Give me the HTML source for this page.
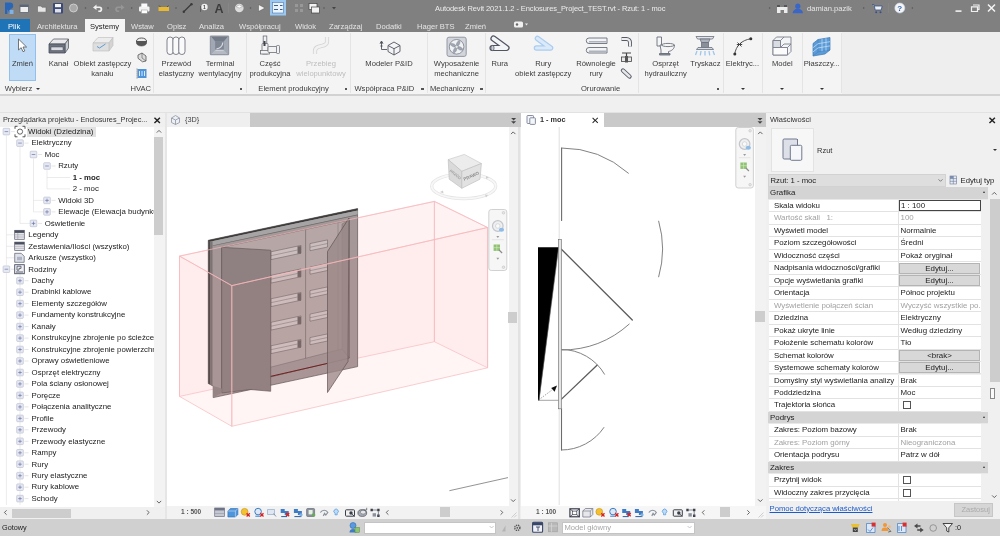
<!DOCTYPE html><html lang="pl"><head><meta charset="utf-8"><title>Autodesk Revit 2021.1.2 - Enclosures_Project_TEST.rvt - Rzut: 1 - moc</title><style>
*{box-sizing:border-box;margin:0;padding:0}
html,body{width:1000px;height:536px;overflow:hidden;background:#eeeeee}
body{font-family:"Liberation Sans",sans-serif;font-size:7.4px;color:#333;position:relative;filter:blur(0.4px)}
.a{position:absolute}
.t{position:absolute;white-space:nowrap;line-height:10px}
.c{position:absolute;white-space:nowrap;line-height:10.6px;text-align:center;transform:translateX(-50%);font-size:7.6px;color:#3a3a3a}
.sep{position:absolute;width:1px;background:#e4e4e4;top:33px;height:60px}
.tab{position:absolute;top:19.5px;height:13px;line-height:13px;color:#e4e4e4;font-size:7.6px;white-space:nowrap}
.row{position:absolute;left:0;height:11.4px;line-height:11.4px;white-space:nowrap;font-size:7.85px;color:#222}
.pm{position:absolute;width:5px;height:5px;border:0.6px solid #aaa;background:#f4f4f4}
.pr{white-space:nowrap;overflow:hidden;position:absolute;left:769px;width:212px;height:12.48px;border-bottom:1px solid #e2e2e2;background:#fff;font-size:7.9px;line-height:11.8px;color:#222}
.pr .k{position:absolute;left:5px;top:0;letter-spacing:-0.05px}
.pr .v{position:absolute;left:131.5px;top:0}
.pr .vs{position:absolute;left:129px;top:0;bottom:0;width:1px;background:#e2e2e2}
.gh{position:absolute;left:768px;width:220px;height:12.48px;background:#d4d4d4;font-size:7.9px;line-height:11.8px;color:#222;padding-left:2px;border-bottom:1px solid #e8e8e8}
.btn{position:absolute;left:130px;top:0.4px;width:81px;height:11px;background:#d8d8d8;border:0.7px solid #b4b4b4;text-align:center;line-height:9.8px}
.cb{position:absolute;left:133.5px;top:1.8px;width:8px;height:8px;border:0.8px solid #555;background:#fff}
</style></head><body>
<div class="a" style="left:0;top:0;width:1000px;height:31.6px;background:#808080"></div>
<div class="t" style="left:435px;top:4px;color:#ececec;font-size:7.5px;letter-spacing:-0.1px">Autodesk Revit 2021.1.2 - Enclosures_Project_TEST.rvt - Rzut: 1 - moc</div>
<div class="t" style="left:807px;top:4px;color:#e6e6e6;font-size:7.6px">damian.pazik</div>
<div class="a" style="left:0;top:19px;width:30px;height:12.6px;background:#1f74b8"></div>
<div class="a" style="left:85px;top:19.2px;width:40.2px;height:12.6px;background:#f4f4f4"></div>
<div class="tab" style="left:8px;color:#fff;">Plik</div>
<div class="tab" style="left:37px;">Architektura</div>
<div class="tab" style="left:90px;color:#222;">Systemy</div>
<div class="tab" style="left:131px;">Wstaw</div>
<div class="tab" style="left:167px;">Opisz</div>
<div class="tab" style="left:199px;">Analiza</div>
<div class="tab" style="left:239px;">Współpracuj</div>
<div class="tab" style="left:295px;">Widok</div>
<div class="tab" style="left:329px;">Zarządzaj</div>
<div class="tab" style="left:376px;">Dodatki</div>
<div class="tab" style="left:417px;">Hager BTS</div>
<div class="tab" style="left:465px;">Zmień</div>
<div class="a" style="left:0;top:31.6px;width:1000px;height:63.4px;background:#eeeeee"></div>
<div class="a" style="left:0;top:31.6px;width:842px;height:63.4px;background:#f4f4f4"></div>
<div class="a" style="left:0;top:94px;width:1000px;height:1.5px;background:#d2d2d2"></div>
<div class="a" style="left:9px;top:34px;width:27px;height:47px;background:#bfdbf5;border:1px solid #93c0ea"></div>
<div class="sep" style="left:153px"></div>
<div class="sep" style="left:246px"></div>
<div class="sep" style="left:350px"></div>
<div class="sep" style="left:427px"></div>
<div class="sep" style="left:485px"></div>
<div class="sep" style="left:638px"></div>
<div class="sep" style="left:723px"></div>
<div class="sep" style="left:762px"></div>
<div class="sep" style="left:802px"></div>
<div class="sep" style="left:841px"></div>
<div class="c" style="left:22.5px;top:58.9px;">Zmień</div>
<div class="c" style="left:58.4px;top:58.9px;">Kanał</div>
<div class="c" style="left:102.4px;top:58.9px;">Obiekt zastępczy<br>kanału</div>
<div class="c" style="left:176.4px;top:58.9px;">Przewód<br>elastyczny</div>
<div class="c" style="left:220px;top:58.9px;">Terminal<br>wentylacyjny</div>
<div class="c" style="left:270px;top:58.9px;">Część<br>produkcyjna</div>
<div class="c" style="left:321px;top:58.9px;color:#bdbdbd;">Przebieg<br>wielopunktowy</div>
<div class="c" style="left:389px;top:58.9px;">Modeler P&amp;ID</div>
<div class="c" style="left:456.6px;top:58.9px;">Wyposażenie<br>mechaniczne</div>
<div class="c" style="left:499.8px;top:58.9px;">Rura</div>
<div class="c" style="left:543.2px;top:58.9px;">Rury<br>obiekt zastępczy</div>
<div class="c" style="left:596px;top:58.9px;">Równoległe<br>rury</div>
<div class="c" style="left:665.6px;top:58.9px;">Osprzęt<br>hydrauliczny</div>
<div class="c" style="left:705.4px;top:58.9px;">Tryskacz</div>
<div class="c" style="left:742.4px;top:58.9px;">Elektryc...</div>
<div class="c" style="left:782.4px;top:58.9px;">Model</div>
<div class="c" style="left:821.6px;top:58.9px;">Płaszczy...</div>
<div class="c" style="left:18.5px;top:84.2px;">Wybierz</div>
<div class="c" style="left:140.8px;top:84.2px;">HVAC</div>
<div class="c" style="left:293.6px;top:84.2px;">Element produkcyjny</div>
<div class="c" style="left:384.4px;top:84.2px;">Współpraca P&amp;ID</div>
<div class="c" style="left:452.2px;top:84.2px;">Mechaniczny</div>
<div class="c" style="left:600.6px;top:84.2px;">Orurowanie</div>
<div class="a" style="left:239.7px;top:88px;width:2.4px;height:2.4px;background:#555"></div>
<div class="a" style="left:344.5px;top:88px;width:2.4px;height:2.4px;background:#555"></div>
<div class="a" style="left:421.3px;top:88px;width:2.4px;height:2.4px;background:#555"></div>
<div class="a" style="left:480.3px;top:88px;width:2.4px;height:2.4px;background:#555"></div>
<div class="a" style="left:717.1px;top:88px;width:2.4px;height:2.4px;background:#555"></div>
<div class="a" style="left:35.6px;top:88px;width:0;height:0;border-left:2.2px solid transparent;border-right:2.2px solid transparent;border-top:2.6px solid #333"></div>
<div class="a" style="left:740.6px;top:88px;width:0;height:0;border-left:2.2px solid transparent;border-right:2.2px solid transparent;border-top:2.6px solid #333"></div>
<div class="a" style="left:779.8px;top:88px;width:0;height:0;border-left:2.2px solid transparent;border-right:2.2px solid transparent;border-top:2.6px solid #333"></div>
<div class="a" style="left:819.5px;top:88px;width:0;height:0;border-left:2.2px solid transparent;border-right:2.2px solid transparent;border-top:2.6px solid #333"></div>
<svg class="a" style="left:0;top:0" width="1000" height="95" viewBox="0 0 1000 95">
<!-- ===== title bar quick access ===== -->
<g>
<!-- Revit R -->
<path d="M5 2.5 h5 a3.2 3.2 0 0 1 0 6.4 l3 5 h-3 l-2.6-4.6 v4.6 h-2.4z" fill="#2a66b8"/>
<rect x="9.5" y="10" width="4" height="4" fill="#7fb2e6"/>
<!-- new window -->
<rect x="20" y="5" width="8.5" height="7.5" fill="#eee" stroke="#5b6678" stroke-width="0.8"/><rect x="20" y="5" width="8.5" height="2" fill="#5b6678"/>
<!-- open -->
<path d="M37.5 6 h3.5 l1 1.2 h4 v5 h-8.5z" fill="#e6e6e6" stroke="#666" stroke-width="0.6"/>
<!-- save -->
<rect x="53" y="3" width="10" height="10.5" rx="1" fill="#3b4a78"/><rect x="55" y="4" width="6" height="3.2" fill="#f4f4f4"/><rect x="55" y="9" width="6" height="3.5" fill="#e0e0e8"/>
<!-- sync -->
<circle cx="73.5" cy="8" r="4" fill="#a8a8a8" stroke="#d8d8d8" stroke-width="0.8"/>
<circle cx="85.5" cy="8" r="0.8" fill="#555"/>
<!-- undo -->
<path d="M93 7.5 l3.5-3 v2 h3 a2.8 2.8 0 0 1 0 5.6 h-1.2 v-1.6 h1 a1.2 1.2 0 0 0 0-2.4 h-2.8 v2z" fill="#f0f0f0"/>
<circle cx="108" cy="8" r="0.8" fill="#555"/>
<!-- redo greyed -->
<path d="M124.5 7.5 l-3.5-3 v2 h-3 a2.8 2.8 0 0 0 0 5.6 h1.2 v-1.6 h-1 a1.2 1.2 0 0 1 0-2.4 h2.8 v2z" fill="#969696"/>
<circle cx="131.7" cy="8" r="0.8" fill="#555"/>
<!-- print -->
<rect x="139" y="6.5" width="10.5" height="5" rx="1" fill="#f2f2f2"/><rect x="141.3" y="3.5" width="6" height="3.5" fill="#fafafa"/><rect x="141.3" y="10" width="6" height="3.5" fill="#fff" stroke="#777" stroke-width="0.4"/>
<!-- measure -->
<rect x="158.5" y="7" width="10.5" height="4" fill="#e8b830"/><path d="M159 5.5 l1.5 1.5 M168.5 5.5 l-1.5 1.5" stroke="#444" stroke-width="0.8"/>
<circle cx="176" cy="8" r="0.8" fill="#555"/>
<!-- aligned dim -->
<path d="M183.5 12 l8-8" stroke="#3a3a3a" stroke-width="1.3"/><circle cx="183.8" cy="11.8" r="1.2" fill="#3a3a3a"/><circle cx="191.5" cy="4.2" r="1.2" fill="#3a3a3a"/>
<!-- tag -->
<circle cx="204.5" cy="7" r="3.2" fill="#f0f0f0"/><text x="204.5" y="9" font-size="5" text-anchor="middle" fill="#444" font-weight="bold">1</text><path d="M200.5 6 v6" stroke="#555" stroke-width="0.8"/>
<!-- A -->
<text x="219" y="13" font-size="12.5" text-anchor="middle" fill="#3c3c3c" font-weight="bold">A</text>
<rect x="228.3" y="3" width="0.6" height="10" fill="#8a8a8a"/>
<!-- 3d -->
<circle cx="239.3" cy="8" r="4.3" fill="#dcdcdc"/><path d="M236 6.5 l3.3-1.5 l3.3 1.5 l-3.3 1.5z" fill="#fff" stroke="#888" stroke-width="0.4"/>
<circle cx="250.5" cy="8" r="0.8" fill="#555"/>
<path d="M258.5 4.5 l6.5 3.5 l-6.5 3.5z" fill="#f4f4f4" stroke="#555" stroke-width="0.5"/>
<!-- highlighted -->
<rect x="270" y="0" width="16" height="15.5" fill="#9bc7f0"/><rect x="272.5" y="2.5" width="11" height="10.5" fill="#eaf3fc" stroke="#4a78b0" stroke-width="0.6"/><path d="M274 5.5 h4 M274 9.5 h4 M280 5.5 h2.5 M280 9.5 h2.5" stroke="#3c5e8c" stroke-width="1.2"/>
<!-- greyed -->
<path d="M295 4 h3 v3 h-3z M300 4 h3 v3 h-3z M295 9 h3 v3 h-3z M300 9 h3 v3 h-3z" fill="#989898"/>
<!-- window switch -->
<rect x="309" y="3.5" width="8" height="6" fill="#f2f2f2" stroke="#444" stroke-width="0.7"/><rect x="311.5" y="7" width="8" height="6" fill="#f2f2f2" stroke="#444" stroke-width="0.7"/>
<circle cx="324" cy="8" r="0.8" fill="#555"/>
<path d="M332 7 h4 l-2 2.5z" fill="#444"/>
</g>
<!-- right side title -->
<g>
<circle cx="769.6" cy="8" r="0.8" fill="#555"/>
<path d="M777 5 h3.5 v8 h-3.5z M784 5 h3.5 v8 h-3.5z M780 7 h4.5 v3 h-4.5z" fill="#ececec"/><rect x="777" y="5" width="3.5" height="2" fill="#555"/><rect x="784" y="5" width="3.5" height="2" fill="#555"/>
<circle cx="797.8" cy="6.2" r="2.6" fill="#3a66c8"/><path d="M792.6 13.2 a5.2 4.4 0 0 1 10.4 0z" fill="#3a66c8"/>
<circle cx="863.7" cy="8" r="0.8" fill="#555"/>
<path d="M872 4.5 h2 l1.2 5.5 h6 l1-4 h-7.5" fill="#f0f0f0" stroke="#34508a" stroke-width="0.8"/><circle cx="876.2" cy="12.2" r="1" fill="#34508a"/><circle cx="880.5" cy="12.2" r="1" fill="#34508a"/>
<rect x="888.2" y="3" width="0.6" height="10" fill="#8a8a8a"/>
<circle cx="899.8" cy="8" r="5" fill="#f4f4f4" stroke="#c8d4e8" stroke-width="0.6"/><text x="899.8" y="11" font-size="8" font-weight="bold" text-anchor="middle" fill="#2c5fb4">?</text>
<circle cx="912.4" cy="8" r="0.8" fill="#555"/>
<rect x="955.5" y="10.3" width="6" height="1.6" fill="#f0f0f0"/>
<path d="M973 5 h6 v4.5 h-1.5 M971.5 6.8 h6 v4.7 h-6z" fill="none" stroke="#f0f0f0" stroke-width="1.2"/>
<path d="M988 4.5 l7 7 M995 4.5 l-7 7" stroke="#f4f4f4" stroke-width="1.5"/>
</g>
<!-- tab row icon -->
<rect x="514" y="21.5" width="9" height="6" rx="1.5" fill="#f0f0f0"/><circle cx="517" cy="24.5" r="1.2" fill="#666"/><path d="M525 23.5 h3 l-1.5 2z" fill="#e8e8e8"/>

<!-- ===== ribbon icons ===== -->
<!-- cursor -->
<path d="M18.5 39 v11 l2.7-2.3 l1.8 4 l1.8-0.8 l-1.8-3.9 h3.6z" fill="#fff" stroke="#555" stroke-width="0.8" stroke-linejoin="round"/>
<!-- Kanał -->
<g stroke-linejoin="round">
<path d="M49 44 l4.5-5 h15 l-3.5 5z" fill="#e9e9ec" stroke="#5a5f6a" stroke-width="0.8"/>
<path d="M65 44 l3.5-5 v9 l-3.5 5z" fill="#c9cbd2" stroke="#5a5f6a" stroke-width="0.8"/>
<rect x="49" y="44" width="16" height="9" fill="#6c7280" stroke="#4a4f5a" stroke-width="0.8"/>
<rect x="51" y="47" width="12" height="3.5" fill="#d9dbe0" stroke="#454a55" stroke-width="0.5"/>
</g>
<!-- Obiekt zastępczy kanału -->
<g stroke-linejoin="round">
<path d="M93 43 l5-5.5 h15 l-4 5.5z" fill="#ececec" stroke="#c2c2c2" stroke-width="0.7"/>
<path d="M109 43 l4-5.5 v8 l-4 5.5z" fill="#d4d4d4" stroke="#c2c2c2" stroke-width="0.7"/>
<rect x="93" y="43" width="16" height="8" fill="#dedede" stroke="#c2c2c2" stroke-width="0.7"/>
<path d="M97 46.5 l2.5 1.5 l6-4" fill="none" stroke="#5b9bd8" stroke-width="1"/>
</g>
<!-- small icons HVAC -->
<ellipse cx="141.5" cy="41" rx="5" ry="3" fill="#ececec" stroke="#4a4a4a" stroke-width="0.9"/><path d="M136.5 41 v2 a5 3 0 0 0 10 0 v-2" fill="#555" stroke="#4a4a4a" stroke-width="0.6"/>
<path d="M138 55 l4-2 l4 3 v5 l-3.5 0.8 l-4.5-3.5z" fill="#dcdcdc" stroke="#555" stroke-width="0.8"/><path d="M142 53 v5 l4 3" fill="none" stroke="#555" stroke-width="0.6"/>
<rect x="137.5" y="69" width="9" height="9" fill="#4f94d8"/><path d="M139.5 71 v5 M142 71 v5 M144.5 71 v5" stroke="#dceafa" stroke-width="1"/><path d="M137 68.5 v10.5" stroke="#555" stroke-width="0.7" stroke-dasharray="1.2 0.8"/>
<!-- Przewód elastyczny -->
<g fill="#fafafa" stroke="#70757f" stroke-width="0.9">
<rect x="167" y="37" width="6.2" height="17.5" rx="3"/><rect x="172.9" y="37" width="6.2" height="17.5" rx="3"/><rect x="178.8" y="37" width="6.2" height="17.5" rx="3"/>
</g>
<!-- Terminal wentylacyjny -->
<rect x="209.8" y="35.6" width="19.4" height="19.6" rx="1.2" fill="#9299a5"/>
<path d="M211 36.8 h17 l-4.2 4.8 h-8.6z" fill="#737b89"/><path d="M211 54 h17 l-4.2-4.6 h-8.6z" fill="#b4b9c3"/><path d="M211 36.8 l4.2 4.8 v7.8 l-4.2 4.6z" fill="#a2a8b3"/><path d="M228 36.8 l-4.2 4.8 v7.8 l4.2 4.6z" fill="#a2a8b3"/>
<rect x="215.2" y="41.6" width="8.6" height="7.8" fill="#7f8694"/>
<path d="M216.5 48.8 a6.5 6.5 0 0 0 6.3-6.3" fill="none" stroke="#d4d8df" stroke-width="1.3"/><path d="M215.5 50.6 h8" stroke="#cfd3da" stroke-width="1"/>
<!-- Część produkcyjna -->
<g stroke="#6a6f78" stroke-width="0.8" fill="#f2f2f2">
<rect x="263.2" y="36" width="3.6" height="9"/><rect x="262" y="43.5" width="6" height="10.5" rx="0.8"/><rect x="260.5" y="50.5" width="9" height="3.5"/>
<rect x="268" y="46.5" width="10.5" height="6" rx="1"/><rect x="276.5" y="45.5" width="3" height="8" rx="0.8"/>
</g><rect x="263.5" y="41" width="2" height="5" fill="#3f444c"/>
<!-- Przebieg wielopunktowy -->
<path d="M327 37 v5 c0 6-12 2-12 9 v3" fill="none" stroke="#d3d3d3" stroke-width="4.2"/><path d="M327 37 v5 c0 6-12 2-12 9 v3" fill="none" stroke="#f2f2f2" stroke-width="2.6"/>
<!-- Modeler P&ID -->
<g fill="none" stroke="#50555f" stroke-width="0.9" stroke-linejoin="round">
<path d="M388 45.5 l6-3.5 l6 3.5 v6 l-6 3.5 l-6-3.5z" fill="#f4f4f6"/><path d="M388 45.5 l6 3.2 l6-3.2 M394 48.7 v6.3"/>
<path d="M381.5 41.5 v8 h5.5"/><path d="M380 43.5 l1.5-2.5 l1.5 2.5" fill="#50555f"/>
</g><circle cx="381.5" cy="46" r="1" fill="#50555f"/>
<!-- Wyposażenie mechaniczne -->
<rect x="447" y="37.2" width="19.2" height="19.2" rx="2" fill="#d2d5db" stroke="#8a8f99" stroke-width="0.9"/><circle cx="456.6" cy="46.8" r="7.3" fill="#f1f2f4" stroke="#7a808c" stroke-width="0.8"/>
<path d="M456.6 46.8 c-1-3 1-6 3-6.3 c1 2 0 5-3 6.3 c3-1 6 1 6.3 3 c-2 1-5 0-6.3-3 c1 3-1 6-3 6.3 c-1-2 0-5 3-6.3 c-3 1-6-1-6.3-3 c2-1 5 0 6.3 3z" fill="#9fa5b1" stroke="#7a808c" stroke-width="0.4"/><circle cx="456.6" cy="46.8" r="1.6" fill="#e8e9ec" stroke="#7a808c" stroke-width="0.5"/>
<!-- Rura -->
<path d="M493.5 38.5 l13 9.5 h-14" fill="none" stroke="#4f5561" stroke-width="6.2" stroke-linejoin="round" stroke-linecap="round"/><path d="M493.5 38.5 l13 9.5 h-14" fill="none" stroke="#f4f5f7" stroke-width="3.8" stroke-linejoin="round" stroke-linecap="round"/><ellipse cx="492.5" cy="48" rx="1.6" ry="2.6" fill="#c8ccd4" stroke="#4f5561" stroke-width="0.7"/>
<!-- Rury obiekt zastępczy -->
<path d="M537.5 38.5 l13 9.5 h-14" fill="none" stroke="#a9cdf0" stroke-width="5.6" stroke-linejoin="round" stroke-linecap="round"/><path d="M537.5 38.5 l13 9.5 h-14" fill="none" stroke="#dbe9f8" stroke-width="3.2" stroke-linejoin="round" stroke-linecap="round"/>
<!-- Równoległe rury -->
<g stroke="#6a707c" stroke-width="0.9" fill="#f2f3f5">
<path d="M589 38 h18 v5.5 h-18 a2.75 2.75 0 0 1 0-5.5z"/><path d="M589 47.5 h18 v5.5 h-18 a2.75 2.75 0 0 1 0-5.5z"/></g>
<path d="M589 41.7 h18 M589 51.2 h18" stroke="#aeb3bd" stroke-width="1.4"/>
<!-- small icons pipes -->
<path d="M621.5 39 h5 a3.5 3.5 0 0 1 3.5 3.5 v4" fill="none" stroke="#555a64" stroke-width="4"/><path d="M621.5 39 h5 a3.5 3.5 0 0 1 3.5 3.5 v4" fill="none" stroke="#ededf0" stroke-width="2.2"/>
<path d="M622 53 h9 M626.5 53 v4" stroke="#444" stroke-width="1.2"/><rect x="621.5" y="57" width="10" height="4.5" fill="#e8e8ea" stroke="#444" stroke-width="0.8"/><rect x="625" y="56" width="3" height="6.5" fill="#555"/>
<path d="M623 70.5 l6.5 6" stroke="#555a64" stroke-width="4.4" stroke-linecap="round"/><path d="M623 70.5 l6.5 6" stroke="#e6e7ea" stroke-width="2.4" stroke-linecap="round"/>
<!-- Osprzęt hydrauliczny -->
<g stroke="#6a707c" stroke-width="0.9" fill="#f5f5f6" stroke-linejoin="round">
<path d="M657 37 h4.5 v9 h-4.5z"/><path d="M660 45 h14.5 c0 4-3 6-6 6.5 v2 h-7.5 v-3.5z"/><path d="M659.5 53.5 h10.5 v1.5 h-10.5z" fill="#8a8f99"/><ellipse cx="668" cy="45" rx="6.3" ry="1.6"/></g>
<!-- Tryskacz -->
<g stroke="#6a707c" stroke-width="0.8" stroke-linejoin="round">
<path d="M696 36.5 h18 l-1.5 2.5 h-15z" fill="#e3e5ea"/><path d="M700 39 h10 l-1.5 3.5 h-7z" fill="#aeb3bd"/><path d="M701.5 42.5 h7 v5 h-7z" fill="#8a8f99"/><path d="M698 47.5 h14 l1.5 2 h-17z" fill="#d8dbe1"/></g>
<path d="M697 51 l-1.5 4 M701 51 l-0.7 4.3 M705 51 v4.5 M709 51 l0.7 4.3 M713 51 l1.5 4" stroke="#9cc6ee" stroke-width="1.3"/>
<!-- Elektryc -->
<path d="M734.8 54 c1-8 7-14 16-15.2" fill="none" stroke="#444" stroke-width="0.9"/><circle cx="734.8" cy="54" r="1.5" fill="#333"/><circle cx="750.8" cy="38.8" r="1.5" fill="#333"/><path d="M737.5 42.5 l4 4 M741.5 42.5 l-4 4 M736.8 44.5 h5.4" stroke="#333" stroke-width="0.9"/>
<!-- Model -->
<g stroke="#7a808c" stroke-width="0.9" stroke-linejoin="round">
<path d="M773 40.5 l3.5-3.5 h14.5 v14.5 l-3.5 3.5 h-14.5z" fill="#f3f4f6"/><path d="M773 40.5 h7.5 v7 h7 v7.5 M780.5 40.5 l3.5-3.5 M787.5 47.5 l3.5-3.5 M780.5 47.5 l3.5-3.5 h7" fill="none"/><rect x="773" y="40.5" width="7.5" height="7" fill="#d9dce2"/><rect x="773" y="47.5" width="14.5" height="7.5" fill="#fbfbfc"/></g>
<!-- Płaszczy -->
<g stroke-linejoin="round"><path d="M813 43.5 l5-4 l12-2 v12.5 l-5 4 l-12 2z" fill="#5a9bd8" stroke="#3f78b4" stroke-width="0.7"/>
<path d="M818 39.5 v12.5 l-5 4 M818 52 l12-2" fill="none" stroke="#3f78b4" stroke-width="0.5"/>
<path d="M822 38.8 v12.5 M826 38.2 v12.5 M818 43.7 l12-2 M818 47.9 l12-2 M813 47.7 l5-4 M813 51.9 l5-4" stroke="#cfe3f6" stroke-width="0.7" fill="none"/></g>
</svg>

<div class="a" style="left:0;top:95.5px;width:1000px;height:17.5px;background:#f0f0f0"></div>
<div class="a" style="left:0;top:112px;width:1000px;height:1px;background:#e2e2e2"></div>
<div class="a" style="left:0;top:113px;width:166px;height:14px;background:#f0f0f0"></div>
<div class="t" style="left:3px;top:115px;font-size:7.3px;color:#333">Przeglądarka projektu - Enclosures_Projec...</div>
<div class="t" style="left:153px;top:113.5px;font-size:10px;line-height:13px;color:#222;font-weight:bold">✕</div>
<div class="a" style="left:0;top:127px;width:154px;height:380px;background:#fff;overflow:hidden" id="tree">
<div class="a" style="left:27px;top:-0.8px;width:69px;height:11px;background:#e0e0e0"></div>
<div class="row" style="left:28px;top:-1.1px;">Widoki (Dziedzina)</div>
<div class="row" style="left:31.6px;top:10.37px;">Elektryczny</div>
<div class="row" style="left:44.7px;top:21.84px;">Moc</div>
<div class="row" style="left:58.2px;top:33.31px;">Rzuty</div>
<div class="row" style="left:72.7px;top:44.78px;font-weight:bold;">1 - moc</div>
<div class="row" style="left:72.7px;top:56.25px;">2 - moc</div>
<div class="row" style="left:58.2px;top:67.72px;">Widoki 3D</div>
<div class="row" style="left:58.2px;top:79.19px;">Elewacje (Elewacja budynku</div>
<div class="row" style="left:44.7px;top:90.66px;">Oświetlenie</div>
<div class="row" style="left:28.3px;top:102.13px;">Legendy</div>
<div class="row" style="left:28.3px;top:113.6px;">Zestawienia/Ilości (wszystko)</div>
<div class="row" style="left:28.3px;top:125.07px;">Arkusze (wszystko)</div>
<div class="row" style="left:28.3px;top:136.54px;">Rodziny</div>
<div class="row" style="left:31.6px;top:148.01px;">Dachy</div>
<div class="row" style="left:31.6px;top:159.48px;">Drabinki kablowe</div>
<div class="row" style="left:31.6px;top:170.95px;">Elementy szczegółów</div>
<div class="row" style="left:31.6px;top:182.42px;">Fundamenty konstrukcyjne</div>
<div class="row" style="left:31.6px;top:193.89px;">Kanały</div>
<div class="row" style="left:31.6px;top:205.36px;">Konstrukcyjne zbrojenie po ścieżce</div>
<div class="row" style="left:31.6px;top:216.83px;">Konstrukcyjne zbrojenie powierzchni</div>
<div class="row" style="left:31.6px;top:228.3px;">Oprawy oświetleniowe</div>
<div class="row" style="left:31.6px;top:239.77px;">Osprzęt elektryczny</div>
<div class="row" style="left:31.6px;top:251.24px;">Pola ściany osłonowej</div>
<div class="row" style="left:31.6px;top:262.71px;">Poręcze</div>
<div class="row" style="left:31.6px;top:274.18px;">Połączenia analityczne</div>
<div class="row" style="left:31.6px;top:285.65px;">Profile</div>
<div class="row" style="left:31.6px;top:297.12px;">Przewody</div>
<div class="row" style="left:31.6px;top:308.59px;">Przewody elastyczne</div>
<div class="row" style="left:31.6px;top:320.06px;">Rampy</div>
<div class="row" style="left:31.6px;top:331.53px;">Rury</div>
<div class="row" style="left:31.6px;top:343px;">Rury elastyczne</div>
<div class="row" style="left:31.6px;top:354.47px;">Rury kablowe</div>
<div class="row" style="left:31.6px;top:365.94px;">Schody</div>
<div class="row" style="left:31.6px;top:377.41px;">Stropy</div>
</div>
<div class="a" style="left:154px;top:127px;width:11px;height:380px;background:#f3f3f3"></div>
<div class="a" style="left:154.3px;top:137px;width:9px;height:98px;background:#cdcdcd"></div>
<div class="a" style="left:0;top:507px;width:166px;height:12px;background:#f0f0f0"></div>
<div class="a" style="left:12px;top:509.3px;width:58.5px;height:8.5px;background:#cdcdcd"></div>
<div class="a" style="left:165px;top:113px;width:2px;height:406px;background:#e6e6e6"></div>
<div class="a" style="left:167px;top:113px;width:353.5px;height:14px;background:#c9c9c9"></div>
<div class="a" style="left:167px;top:113px;width:83px;height:14px;background:#efefef"></div>
<div class="t" style="left:185px;top:115px;font-size:7.3px;color:#444">{3D}</div>
<div class="a" style="left:167px;top:127px;width:341.6px;height:378.5px;background:#fff"></div>
<div class="a" style="left:508.6px;top:127px;width:9.6px;height:378.5px;background:#f2f2f2"></div>
<div class="a" style="left:508px;top:311.5px;width:9.4px;height:11.2px;background:#cdcdcd"></div>
<div class="a" style="left:167px;top:505.5px;width:351.2px;height:13.7px;background:#f2f2f2"></div>
<div class="t" style="left:181px;top:507px;font-size:6.5px;font-weight:bold;color:#555">1 : 500</div>
<div class="a" style="left:440px;top:507px;width:10px;height:10px;background:#cdcdcd"></div>
<div class="a" style="left:518.2px;top:127px;width:2.3px;height:392.2px;background:#e2e2e2"></div>
<svg class="a" style="left:167px;top:127px" width="342" height="378" viewBox="167 127 342 378">
<!-- wall box -->
<g fill="rgba(255,110,110,0.055)" stroke="#f8c2c6" stroke-width="0.7" stroke-linejoin="round">
<polygon points="179.5,256.1 434.4,201.4 434.4,341.7 179.5,396.4"/>
<polygon points="434.4,201.4 487.6,227.5 487.6,367.8 434.4,341.7"/>
</g>
<!-- enclosure -->
<g stroke-linejoin="round">
<polygon points="208.3,240.3 357.6,208.6 357.6,366.6 213.2,397.6 213.2,386 208.3,383.5" fill="#a39999" stroke="#5a5555" stroke-width="0.7"/>
<polygon points="208.3,240.3 357.6,208.6 357.6,210.4 208.3,242.1" fill="#3e3c3c"/>
<polygon points="212.5,241.2 357.6,210.4 357.6,214.6 212.5,245.4" fill="#a6a4a4"/>
<polygon points="212.5,245.4 357.6,214.6 357.6,215.3 212.5,246.1" fill="#6e6969"/>
<polygon points="208.3,242.1 210.3,241.7 210.3,384.5 208.3,383.5" fill="#4e4a4a"/>
<polygon points="210.3,241.7 212.5,241.2 212.5,386 210.3,384.5" fill="#7a7474"/>
<!-- inner recess -->
<polygon points="221.7,247.3 349.3,220 349.3,358 221.7,388.5" fill="#b4a9a9" stroke="#5f5858" stroke-width="0.6"/>
<!-- inner box side right -->
<polygon points="342,224 349.3,220 349.3,358 342,349" fill="#9d9292" stroke="#6a6262" stroke-width="0.4"/>
<line x1="305.6" y1="229.5" x2="305.6" y2="365" stroke="#6a6262" stroke-width="0.6"/>
<line x1="338" y1="223" x2="338" y2="352" stroke="#7a7171" stroke-width="0.5"/>
<!-- bottom inner ledge -->
<polygon points="221.7,388.5 349.3,358 342,349 228,378" fill="#a19797" stroke="#5f5858" stroke-width="0.4"/>
<line x1="270" y1="376.5" x2="327" y2="363.5" stroke="#6b1c1c" stroke-width="1"/>
<!-- slots left column -->
<g fill="#cbc2c2" stroke="#5f5858" stroke-width="0.5">
<polygon points="271,251.8 301,245.4 301,253.2 271,259.6"/>
<polygon points="271,275.3 301,268.9 301,276.7 271,283.1"/>
<polygon points="271,298.8 301,292.4 301,300.2 271,306.6"/>
<polygon points="271,322.3 301,315.9 301,323.7 271,330.1"/>
<polygon points="271,345.8 301,339.4 301,347.2 271,353.6"/>
<polygon points="310,243.6 327.5,239.9 327.5,247 310,250.7"/>
<polygon points="310,267.1 327.5,263.4 327.5,270.5 310,274.2"/>
<polygon points="310,290.6 327.5,286.9 327.5,294 310,297.7"/>
<polygon points="310,314.1 327.5,310.4 327.5,317.5 310,321.2"/>
<polygon points="310,337.6 327.5,333.9 327.5,341 310,344.7"/>
</g>
<g fill="#6f6767">
<rect x="297.5" y="246.2" width="3.5" height="7.5"/>
<rect x="297.5" y="269.7" width="3.5" height="7.5"/>
<rect x="297.5" y="293.2" width="3.5" height="7.5"/>
<rect x="297.5" y="316.7" width="3.5" height="7.5"/>
<rect x="297.5" y="340.2" width="3.5" height="7.5"/>
</g>
<g stroke="#5f5858" stroke-width="0.4">
<line x1="271" y1="255.7" x2="297.5" y2="250"/>
<line x1="271" y1="279.2" x2="297.5" y2="273.5"/>
<line x1="271" y1="302.7" x2="297.5" y2="297"/>
<line x1="271" y1="326.2" x2="297.5" y2="320.5"/>
<line x1="271" y1="349.7" x2="297.5" y2="344"/>
<line x1="310" y1="247.2" x2="327.5" y2="243.5"/>
<line x1="310" y1="270.7" x2="327.5" y2="267"/>
<line x1="310" y1="294.2" x2="327.5" y2="290.5"/>
<line x1="310" y1="317.7" x2="327.5" y2="314"/>
<line x1="310" y1="341.2" x2="327.5" y2="337.5"/>
</g>
<!-- left door -->
<polygon points="221.7,247.3 270.7,250.2 270.7,391.3 250,389.5 221.7,393" fill="#8c8383" stroke="#5a5353" stroke-width="0.6"/>
<polygon points="213.2,386 221.7,388.5 221.7,393 213.2,397.6" fill="#8f8686"/>
<!-- right door -->
<polygon points="349,218 327.5,251.5 327.5,392.5 348,361.5" fill="rgba(150,138,138,0.78)" stroke="#5a5353" stroke-width="0.7"/>
</g>
<!-- wall front faces (transparent, drawn over) -->
<g fill="rgba(255,110,110,0.065)" stroke="#f6b8bc" stroke-width="0.7" stroke-linejoin="round">
<polygon points="179.5,256.1 231.8,285.6 231.8,426.3 179.5,396.4"/>
<polygon points="231.8,285.6 487.6,227.5 487.6,367.8 231.8,426.3"/>
<polygon points="179.5,256.1 434.4,201.4 487.6,227.5 231.8,285.6" fill="rgba(255,110,110,0.03)"/>
</g>
<line x1="449.4" y1="490.7" x2="508" y2="477.6" stroke="#777" stroke-width="0.8"/>
</svg>

<div class="a" style="left:520.5px;top:113px;width:245.5px;height:14px;background:#c9c9c9"></div>
<div class="a" style="left:520.5px;top:113px;width:83.5px;height:14px;background:#fff"></div>
<div class="t" style="left:540px;top:115px;font-size:7.3px;font-weight:bold;color:#333">1 - moc</div>
<div class="t" style="left:591px;top:113.5px;font-size:10px;line-height:13px;color:#222">✕</div>
<div class="a" style="left:520.5px;top:127px;width:234.5px;height:378.5px;background:#fff"></div>
<div class="a" style="left:755px;top:127px;width:11px;height:378.5px;background:#f2f2f2"></div>
<div class="a" style="left:755px;top:311px;width:10px;height:11px;background:#cdcdcd"></div>
<div class="a" style="left:520.5px;top:505.5px;width:245.5px;height:13.7px;background:#f6f6f6"></div>
<div class="t" style="left:536px;top:507px;font-size:6.5px;font-weight:bold;color:#555">1 : 100</div>
<div class="a" style="left:720px;top:507px;width:10px;height:10px;background:#cdcdcd"></div>
<svg class="a" style="left:523px;top:127px" width="231" height="378" viewBox="523 127 231 378">
<line x1="559.2" y1="127" x2="559.2" y2="505" stroke="#d8d8d8" stroke-width="0.8"/>
<g fill="none" stroke="#828282" stroke-width="1" stroke-linecap="round">
<path d="M561.6 148.0 A101 101 0 0 1 628.4 173.2"/>
<path d="M658.7 221.2 A101 101 0 0 1 658.7 276.8"/>
<path d="M629.2 324.1 A101 101 0 0 1 561.6 350.0"/>
<line x1="561.6" y1="148" x2="561.6" y2="220.5" stroke="#6c6c6c" stroke-width="1.1"/>
<line x1="561.4" y1="249.3" x2="632.3" y2="320" stroke="#5c5c5c" stroke-width="1.3"/>
<path d="M561.6 349.5 A49.5 49.5 0 0 1 604.5 374.2"/>
<path d="M603.9 427.5 A51 51 0 0 1 561.6 450.0"/>
<line x1="561.5" y1="399.1" x2="597" y2="365.2" stroke="#5c5c5c" stroke-width="1.3"/>
<line x1="561.5" y1="408.8" x2="561.5" y2="450" stroke="#6c6c6c" stroke-width="1.1"/>
</g>
<polygon points="538,247.3 558.6,247.3 539.2,400.3 538,400.3" fill="#000"/>
<g stroke="#666" stroke-width="0.6" fill="none"><line x1="558.6" y1="247.3" x2="539" y2="400.3"/><line x1="538" y1="400.3" x2="558.6" y2="400.3"/><line x1="538.5" y1="400" x2="552" y2="390" stroke-dasharray="1.5 1.2"/></g>
<polygon points="557,385.5 551.2,388 554.6,391.8" fill="#111"/>
<rect x="558.6" y="239.3" width="2.9" height="169.5" fill="#e4e4e4" stroke="#6a6a6a" stroke-width="0.6"/>
</svg>
<div class="a" style="left:766px;top:113px;width:234px;height:406px;background:#f0f0f0"></div>
<div class="t" style="left:770px;top:115px;font-size:7.5px;color:#333">Właściwości</div>
<div class="t" style="left:988px;top:113.5px;font-size:10px;line-height:13px;color:#222;font-weight:bold">✕</div>
<div class="a" style="left:771px;top:128px;width:43px;height:44px;background:#f7f7f7;border:1px solid #e3e3e3"></div>
<div class="t" style="left:817px;top:145.5px;font-size:7.5px;color:#333">Rzut</div>
<div class="a" style="left:993px;top:149px;width:0;height:0;border-left:2px solid transparent;border-right:2px solid transparent;border-top:2.5px solid #333"></div>
<div class="a" style="left:768px;top:173.5px;width:178px;height:13.5px;background:#dedede;border:1px solid #d2d2d2"></div>
<div class="t" style="left:770.5px;top:175.5px;font-size:7.7px;color:#222">Rzut: 1 - moc</div>
<div class="t" style="left:960.5px;top:175.5px;font-size:7.7px;color:#222">Edytuj typ</div>
<div class="a" style="left:767px;top:187px;width:233px;height:314px;overflow:hidden"><div class="a" style="left:-767px;top:-187px">
<div class="gh" style="top:187.3px">Grafika<span class="a" style="right:3px;top:4px;width:0;height:0;border-left:1.8px solid transparent;border-right:1.8px solid transparent;border-bottom:2.4px solid #333"></span></div>
<div class="pr" style="top:199.78px;color:#222"><span class="k">Skala widoku</span><span class="vs"></span><span class="a" style="left:129.5px;top:0.3px;width:82.5px;height:11.4px;border:1px solid #444;padding-left:1.5px;line-height:9.6px">1 : 100</span></div>
<div class="pr" style="top:212.26px;color:#a2a2a2"><span class="k">Wartość skali &nbsp; 1:</span><span class="vs"></span><span class="v">100</span></div>
<div class="pr" style="top:224.74px;color:#222"><span class="k">Wyświetl model</span><span class="vs"></span><span class="v">Normalnie</span></div>
<div class="pr" style="top:237.22px;color:#222"><span class="k">Poziom szczegółowości</span><span class="vs"></span><span class="v">Średni</span></div>
<div class="pr" style="top:249.7px;color:#222"><span class="k">Widoczność części</span><span class="vs"></span><span class="v">Pokaż oryginał</span></div>
<div class="pr" style="top:262.18px;color:#222"><span class="k">Nadpisania widoczności/grafiki</span><span class="vs"></span><span class="btn">Edytuj...</span></div>
<div class="pr" style="top:274.66px;color:#222"><span class="k">Opcje wyświetlania grafiki</span><span class="vs"></span><span class="btn">Edytuj...</span></div>
<div class="pr" style="top:287.14px;color:#222"><span class="k">Orientacja</span><span class="vs"></span><span class="v">Północ projektu</span></div>
<div class="pr" style="top:299.62px;color:#a2a2a2"><span class="k">Wyświetlenie połączeń ścian</span><span class="vs"></span><span class="v">Wyczyść wszystkie po...</span></div>
<div class="pr" style="top:312.1px;color:#222"><span class="k">Dziedzina</span><span class="vs"></span><span class="v">Elektryczny</span></div>
<div class="pr" style="top:324.58px;color:#222"><span class="k">Pokaż ukryte linie</span><span class="vs"></span><span class="v">Według dziedziny</span></div>
<div class="pr" style="top:337.06px;color:#222"><span class="k">Położenie schematu kolorów</span><span class="vs"></span><span class="v">Tło</span></div>
<div class="pr" style="top:349.54px;color:#222"><span class="k">Schemat kolorów</span><span class="vs"></span><span class="btn">&lt;brak&gt;</span></div>
<div class="pr" style="top:362.02px;color:#222"><span class="k">Systemowe schematy kolorów</span><span class="vs"></span><span class="btn">Edytuj...</span></div>
<div class="pr" style="top:374.5px;color:#222"><span class="k">Domyślny styl wyświetlania analizy</span><span class="vs"></span><span class="v">Brak</span></div>
<div class="pr" style="top:386.98px;color:#222"><span class="k">Poddziedzina</span><span class="vs"></span><span class="v">Moc</span></div>
<div class="pr" style="top:399.46px;color:#222"><span class="k">Trajektoria słońca</span><span class="vs"></span><span class="cb"></span></div>
<div class="gh" style="top:411.94px">Podrys<span class="a" style="right:3px;top:4px;width:0;height:0;border-left:1.8px solid transparent;border-right:1.8px solid transparent;border-bottom:2.4px solid #333"></span></div>
<div class="pr" style="top:424.42px;color:#222"><span class="k">Zakres: Poziom bazowy</span><span class="vs"></span><span class="v">Brak</span></div>
<div class="pr" style="top:436.9px;color:#a2a2a2"><span class="k">Zakres: Poziom górny</span><span class="vs"></span><span class="v">Nieograniczona</span></div>
<div class="pr" style="top:449.38px;color:#222"><span class="k">Orientacja podrysu</span><span class="vs"></span><span class="v">Patrz w dół</span></div>
<div class="gh" style="top:461.86px">Zakres<span class="a" style="right:3px;top:4px;width:0;height:0;border-left:1.8px solid transparent;border-right:1.8px solid transparent;border-bottom:2.4px solid #333"></span></div>
<div class="pr" style="top:474.34px;color:#222"><span class="k">Przytnij widok</span><span class="vs"></span><span class="cb"></span></div>
<div class="pr" style="top:486.82px;color:#222"><span class="k">Widoczny zakres przycięcia</span><span class="vs"></span><span class="cb"></span></div>
<div class="pr" style="top:499.3px;color:#222"><span class="k">Przycięcie opisu</span><span class="vs"></span><span class="cb"></span></div>
</div></div>
<div class="a" style="left:989px;top:187px;width:11px;height:314px;background:#f0f0f0"></div>
<div class="a" style="left:989.5px;top:199px;width:10.5px;height:183px;background:#cdcdcd"></div>
<div class="a" style="left:990px;top:388px;width:5px;height:10.5px;background:#fafafa;border:0.8px solid #888"></div>
<div class="t" style="left:769.5px;top:503.7px;font-size:7.7px;color:#1c5ac8;text-decoration:underline">Pomoc dotycząca właściwości</div>
<div class="a" style="left:954px;top:503px;width:38.5px;height:13.5px;background:#d6d6d6;border:1px solid #c6c6c6"></div>
<div class="t" style="left:961.5px;top:504.7px;font-size:7.5px;color:#aaa">Zastosuj</div>
<div class="a" style="left:0;top:519.2px;width:1000px;height:16.8px;background:#d0d0d0"></div>
<div class="t" style="left:2px;top:523px;font-size:7.3px;color:#222">Gotowy</div>
<div class="a" style="left:364px;top:521.5px;width:132px;height:12px;background:#fff;border:1px solid #c4c4c4"></div>
<div class="a" style="left:562px;top:521.5px;width:133px;height:12px;background:#fff;border:1px solid #c4c4c4"></div>
<div class="t" style="left:564.5px;top:522.8px;font-size:7.6px;color:#a6a6a6">Model główny</div>
<div class="t" style="left:955px;top:523px;font-size:7.3px;color:#222">:0</div>
<svg class="a" style="left:0;top:113px" width="1000" height="423" viewBox="0 113 1000 423">
<g stroke="#dedede" stroke-width="0.6" fill="none">
<path d="M6.4 135.6 V265.2 M6.4 273.2 V505 M20 147.1 V223.4 M33.5 158.5 V211.9 M47 170.0 V188.9 M47 177.5 H70 M47 188.9 H70 M33.5 200.4 H44 M33.5 211.9 H44 M20 223.4 H30"/>
<path d="M6.4 234.8 H14 M6.4 246.3 H14 M6.4 257.8 H14 M20 274.2 V505"/>
</g>
<rect x="3.1" y="128.3" width="6.6" height="6.6" rx="0.8" fill="#e6e8f2" stroke="#b4b9cc" stroke-width="0.6"/><path d="M4.6 131.6 h3.6" stroke="#6a76a8" stroke-width="0.7"/>
<path d="M10.9 131.6 h4" stroke="#d4d4d4" stroke-width="0.6"/>
<rect x="16.7" y="139.8" width="6.6" height="6.6" rx="0.8" fill="#e6e8f2" stroke="#b4b9cc" stroke-width="0.6"/><path d="M18.2 143.1 h3.6" stroke="#6a76a8" stroke-width="0.7"/>
<path d="M24.5 143.1 h4" stroke="#d4d4d4" stroke-width="0.6"/>
<rect x="30.2" y="151.2" width="6.6" height="6.6" rx="0.8" fill="#e6e8f2" stroke="#b4b9cc" stroke-width="0.6"/><path d="M31.7 154.5 h3.6" stroke="#6a76a8" stroke-width="0.7"/>
<path d="M38.0 154.5 h4" stroke="#d4d4d4" stroke-width="0.6"/>
<rect x="43.7" y="162.7" width="6.6" height="6.6" rx="0.8" fill="#e6e8f2" stroke="#b4b9cc" stroke-width="0.6"/><path d="M45.2 166.0 h3.6" stroke="#6a76a8" stroke-width="0.7"/>
<path d="M51.5 166.0 h4" stroke="#d4d4d4" stroke-width="0.6"/>
<rect x="43.7" y="197.1" width="6.6" height="6.6" rx="0.8" fill="#e6e8f2" stroke="#b4b9cc" stroke-width="0.6"/><path d="M45.2 200.4 h3.6" stroke="#6a76a8" stroke-width="0.7"/><path d="M47.0 198.6 v3.6" stroke="#6a76a8" stroke-width="0.7"/>
<path d="M51.5 200.4 h4" stroke="#d4d4d4" stroke-width="0.6"/>
<rect x="43.7" y="208.6" width="6.6" height="6.6" rx="0.8" fill="#e6e8f2" stroke="#b4b9cc" stroke-width="0.6"/><path d="M45.2 211.9 h3.6" stroke="#6a76a8" stroke-width="0.7"/><path d="M47.0 210.1 v3.6" stroke="#6a76a8" stroke-width="0.7"/>
<path d="M51.5 211.9 h4" stroke="#d4d4d4" stroke-width="0.6"/>
<rect x="30.2" y="220.1" width="6.6" height="6.6" rx="0.8" fill="#e6e8f2" stroke="#b4b9cc" stroke-width="0.6"/><path d="M31.7 223.4 h3.6" stroke="#6a76a8" stroke-width="0.7"/><path d="M33.5 221.6 v3.6" stroke="#6a76a8" stroke-width="0.7"/>
<path d="M38.0 223.4 h4" stroke="#d4d4d4" stroke-width="0.6"/>
<rect x="3.1" y="265.9" width="6.6" height="6.6" rx="0.8" fill="#e6e8f2" stroke="#b4b9cc" stroke-width="0.6"/><path d="M4.6 269.2 h3.6" stroke="#6a76a8" stroke-width="0.7"/>
<path d="M10.9 269.2 h4" stroke="#d4d4d4" stroke-width="0.6"/>
<rect x="16.7" y="277.4" width="6.6" height="6.6" rx="0.8" fill="#e6e8f2" stroke="#b4b9cc" stroke-width="0.6"/><path d="M18.2 280.7 h3.6" stroke="#6a76a8" stroke-width="0.7"/><path d="M20.0 278.9 v3.6" stroke="#6a76a8" stroke-width="0.7"/>
<path d="M24.5 280.7 h4" stroke="#d4d4d4" stroke-width="0.6"/>
<rect x="16.7" y="288.9" width="6.6" height="6.6" rx="0.8" fill="#e6e8f2" stroke="#b4b9cc" stroke-width="0.6"/><path d="M18.2 292.2 h3.6" stroke="#6a76a8" stroke-width="0.7"/><path d="M20.0 290.4 v3.6" stroke="#6a76a8" stroke-width="0.7"/>
<path d="M24.5 292.2 h4" stroke="#d4d4d4" stroke-width="0.6"/>
<rect x="16.7" y="300.3" width="6.6" height="6.6" rx="0.8" fill="#e6e8f2" stroke="#b4b9cc" stroke-width="0.6"/><path d="M18.2 303.6 h3.6" stroke="#6a76a8" stroke-width="0.7"/><path d="M20.0 301.8 v3.6" stroke="#6a76a8" stroke-width="0.7"/>
<path d="M24.5 303.6 h4" stroke="#d4d4d4" stroke-width="0.6"/>
<rect x="16.7" y="311.8" width="6.6" height="6.6" rx="0.8" fill="#e6e8f2" stroke="#b4b9cc" stroke-width="0.6"/><path d="M18.2 315.1 h3.6" stroke="#6a76a8" stroke-width="0.7"/><path d="M20.0 313.3 v3.6" stroke="#6a76a8" stroke-width="0.7"/>
<path d="M24.5 315.1 h4" stroke="#d4d4d4" stroke-width="0.6"/>
<rect x="16.7" y="323.3" width="6.6" height="6.6" rx="0.8" fill="#e6e8f2" stroke="#b4b9cc" stroke-width="0.6"/><path d="M18.2 326.6 h3.6" stroke="#6a76a8" stroke-width="0.7"/><path d="M20.0 324.8 v3.6" stroke="#6a76a8" stroke-width="0.7"/>
<path d="M24.5 326.6 h4" stroke="#d4d4d4" stroke-width="0.6"/>
<rect x="16.7" y="334.8" width="6.6" height="6.6" rx="0.8" fill="#e6e8f2" stroke="#b4b9cc" stroke-width="0.6"/><path d="M18.2 338.1 h3.6" stroke="#6a76a8" stroke-width="0.7"/><path d="M20.0 336.3 v3.6" stroke="#6a76a8" stroke-width="0.7"/>
<path d="M24.5 338.1 h4" stroke="#d4d4d4" stroke-width="0.6"/>
<rect x="16.7" y="346.2" width="6.6" height="6.6" rx="0.8" fill="#e6e8f2" stroke="#b4b9cc" stroke-width="0.6"/><path d="M18.2 349.5 h3.6" stroke="#6a76a8" stroke-width="0.7"/><path d="M20.0 347.7 v3.6" stroke="#6a76a8" stroke-width="0.7"/>
<path d="M24.5 349.5 h4" stroke="#d4d4d4" stroke-width="0.6"/>
<rect x="16.7" y="357.7" width="6.6" height="6.6" rx="0.8" fill="#e6e8f2" stroke="#b4b9cc" stroke-width="0.6"/><path d="M18.2 361.0 h3.6" stroke="#6a76a8" stroke-width="0.7"/><path d="M20.0 359.2 v3.6" stroke="#6a76a8" stroke-width="0.7"/>
<path d="M24.5 361.0 h4" stroke="#d4d4d4" stroke-width="0.6"/>
<rect x="16.7" y="369.2" width="6.6" height="6.6" rx="0.8" fill="#e6e8f2" stroke="#b4b9cc" stroke-width="0.6"/><path d="M18.2 372.5 h3.6" stroke="#6a76a8" stroke-width="0.7"/><path d="M20.0 370.7 v3.6" stroke="#6a76a8" stroke-width="0.7"/>
<path d="M24.5 372.5 h4" stroke="#d4d4d4" stroke-width="0.6"/>
<rect x="16.7" y="380.6" width="6.6" height="6.6" rx="0.8" fill="#e6e8f2" stroke="#b4b9cc" stroke-width="0.6"/><path d="M18.2 383.9 h3.6" stroke="#6a76a8" stroke-width="0.7"/><path d="M20.0 382.1 v3.6" stroke="#6a76a8" stroke-width="0.7"/>
<path d="M24.5 383.9 h4" stroke="#d4d4d4" stroke-width="0.6"/>
<rect x="16.7" y="392.1" width="6.6" height="6.6" rx="0.8" fill="#e6e8f2" stroke="#b4b9cc" stroke-width="0.6"/><path d="M18.2 395.4 h3.6" stroke="#6a76a8" stroke-width="0.7"/><path d="M20.0 393.6 v3.6" stroke="#6a76a8" stroke-width="0.7"/>
<path d="M24.5 395.4 h4" stroke="#d4d4d4" stroke-width="0.6"/>
<rect x="16.7" y="403.6" width="6.6" height="6.6" rx="0.8" fill="#e6e8f2" stroke="#b4b9cc" stroke-width="0.6"/><path d="M18.2 406.9 h3.6" stroke="#6a76a8" stroke-width="0.7"/><path d="M20.0 405.1 v3.6" stroke="#6a76a8" stroke-width="0.7"/>
<path d="M24.5 406.9 h4" stroke="#d4d4d4" stroke-width="0.6"/>
<rect x="16.7" y="415.1" width="6.6" height="6.6" rx="0.8" fill="#e6e8f2" stroke="#b4b9cc" stroke-width="0.6"/><path d="M18.2 418.4 h3.6" stroke="#6a76a8" stroke-width="0.7"/><path d="M20.0 416.6 v3.6" stroke="#6a76a8" stroke-width="0.7"/>
<path d="M24.5 418.4 h4" stroke="#d4d4d4" stroke-width="0.6"/>
<rect x="16.7" y="426.5" width="6.6" height="6.6" rx="0.8" fill="#e6e8f2" stroke="#b4b9cc" stroke-width="0.6"/><path d="M18.2 429.8 h3.6" stroke="#6a76a8" stroke-width="0.7"/><path d="M20.0 428.0 v3.6" stroke="#6a76a8" stroke-width="0.7"/>
<path d="M24.5 429.8 h4" stroke="#d4d4d4" stroke-width="0.6"/>
<rect x="16.7" y="438.0" width="6.6" height="6.6" rx="0.8" fill="#e6e8f2" stroke="#b4b9cc" stroke-width="0.6"/><path d="M18.2 441.3 h3.6" stroke="#6a76a8" stroke-width="0.7"/><path d="M20.0 439.5 v3.6" stroke="#6a76a8" stroke-width="0.7"/>
<path d="M24.5 441.3 h4" stroke="#d4d4d4" stroke-width="0.6"/>
<rect x="16.7" y="449.5" width="6.6" height="6.6" rx="0.8" fill="#e6e8f2" stroke="#b4b9cc" stroke-width="0.6"/><path d="M18.2 452.8 h3.6" stroke="#6a76a8" stroke-width="0.7"/><path d="M20.0 451.0 v3.6" stroke="#6a76a8" stroke-width="0.7"/>
<path d="M24.5 452.8 h4" stroke="#d4d4d4" stroke-width="0.6"/>
<rect x="16.7" y="460.9" width="6.6" height="6.6" rx="0.8" fill="#e6e8f2" stroke="#b4b9cc" stroke-width="0.6"/><path d="M18.2 464.2 h3.6" stroke="#6a76a8" stroke-width="0.7"/><path d="M20.0 462.4 v3.6" stroke="#6a76a8" stroke-width="0.7"/>
<path d="M24.5 464.2 h4" stroke="#d4d4d4" stroke-width="0.6"/>
<rect x="16.7" y="472.4" width="6.6" height="6.6" rx="0.8" fill="#e6e8f2" stroke="#b4b9cc" stroke-width="0.6"/><path d="M18.2 475.7 h3.6" stroke="#6a76a8" stroke-width="0.7"/><path d="M20.0 473.9 v3.6" stroke="#6a76a8" stroke-width="0.7"/>
<path d="M24.5 475.7 h4" stroke="#d4d4d4" stroke-width="0.6"/>
<rect x="16.7" y="483.9" width="6.6" height="6.6" rx="0.8" fill="#e6e8f2" stroke="#b4b9cc" stroke-width="0.6"/><path d="M18.2 487.2 h3.6" stroke="#6a76a8" stroke-width="0.7"/><path d="M20.0 485.4 v3.6" stroke="#6a76a8" stroke-width="0.7"/>
<path d="M24.5 487.2 h4" stroke="#d4d4d4" stroke-width="0.6"/>
<rect x="16.7" y="495.3" width="6.6" height="6.6" rx="0.8" fill="#e6e8f2" stroke="#b4b9cc" stroke-width="0.6"/><path d="M18.2 498.6 h3.6" stroke="#6a76a8" stroke-width="0.7"/><path d="M20.0 496.8 v3.6" stroke="#6a76a8" stroke-width="0.7"/>
<path d="M24.5 498.6 h4" stroke="#d4d4d4" stroke-width="0.6"/>
<g fill="none" stroke="#444" stroke-width="0.9"><path d="M15 128.8 v-2.5 h2.5 M22.5 126.3 h2.5 v2.5 M25 134.3 v2.5 h-2.5 M17.5 136.8 h-2.5 v-2.5"/><circle cx="20" cy="131.6" r="2.6" stroke="#555"/></g>
<g><rect x="14.7" y="230.3" width="9.6" height="9" fill="#e8e8ec" stroke="#5a5f6e" stroke-width="0.7"/><rect x="14.7" y="230.3" width="9.6" height="2.6" fill="#4a4f60"/><path d="M17.8 232.9 v6.4 M14.7 234.8 h9.6 M14.7 237.0 h9.6" stroke="#8a8f9e" stroke-width="0.5"/></g>
<g><rect x="14.7" y="242.1" width="9.6" height="8.4" fill="#e8e8ec" stroke="#5a5f6e" stroke-width="0.7"/><rect x="14.7" y="242.1" width="9.6" height="2.4" fill="#4a4f60"/><path d="M14.7 246.3 h9.6 M14.7 248.3 h9.6" stroke="#8a8f9e" stroke-width="0.5"/></g>
<g><path d="M14.7 253.3 h6.5 l3 3 v6 h-9.5z" fill="#dfe2ea" stroke="#5a5f6e" stroke-width="0.7"/><path d="M17 256.8 h5 v3.5 h-5z" fill="#aeb4c4"/></g>
<g><rect x="14.7" y="264.7" width="9.6" height="9" fill="#f0f0f4" stroke="#4a4f60" stroke-width="0.9"/><path d="M17 270.2 v-4 h4 v2.2 h-2 v1.8z" fill="none" stroke="#4a4f60" stroke-width="0.8"/><path d="M16 272.0 h7" stroke="#4a4f60" stroke-width="0.9"/></g>
<path d="M156.8 132.6 l2.2 -2.2 l2.2 2.2" fill="none" stroke="#555" stroke-width="0.9"/>
<path d="M156.8 500.9 l2.2 2.2 l2.2 -2.2" fill="none" stroke="#555" stroke-width="0.9"/>
<path d="M6.6 510.3 l-2.2 2.2 l2.2 2.2" fill="none" stroke="#555" stroke-width="0.9"/>
<path d="M146.9 510.3 l2.2 2.2 l-2.2 2.2" fill="none" stroke="#555" stroke-width="0.9"/>
<g fill="none" stroke="#8a93a8" stroke-width="0.8"><path d="M171.5 118 l4-2.5 l4 2.5 v4.5 l-4 2 l-4-2z M171.5 118 l4 2 l4-2 M175.5 120 v4.5"/></g>
<path d="M511.1 118 h5 l-2.5 2.5z M511.1 121.2 h5 l-2.5 2.5z" fill="#444"/>
<path d="M757.5 118 h5 l-2.5 2.5z M757.5 121.2 h5 l-2.5 2.5z" fill="#444"/>
<path d="M511.0 134.1 l2.2 -2.2 l2.2 2.2" fill="none" stroke="#555" stroke-width="0.9"/>
<path d="M511.0 499.4 l2.2 2.2 l2.2 -2.2" fill="none" stroke="#555" stroke-width="0.9"/>
<path d="M388.4 510.3 l-2.2 2.2 l2.2 2.2" fill="none" stroke="#555" stroke-width="0.9"/>
<path d="M500.6 510.3 l2.2 2.2 l-2.2 2.2" fill="none" stroke="#555" stroke-width="0.9"/>
<path d="M758.1 134.1 l2.2 -2.2 l2.2 2.2" fill="none" stroke="#555" stroke-width="0.9"/>
<path d="M758.1 499.4 l2.2 2.2 l2.2 -2.2" fill="none" stroke="#555" stroke-width="0.9"/>
<path d="M704.4 510.3 l-2.2 2.2 l2.2 2.2" fill="none" stroke="#555" stroke-width="0.9"/>
<path d="M747.3 510.3 l2.2 2.2 l-2.2 2.2" fill="none" stroke="#555" stroke-width="0.9"/>
<path d="M511.5 517.5 l5-5 M514.0 517.5 l2.5-2.5" stroke="#c4c4c4" stroke-width="0.8"/>
<path d="M758.5 517.5 l5-5 M761.0 517.5 l2.5-2.5" stroke="#c4c4c4" stroke-width="0.8"/>
<g>
<ellipse cx="463.7" cy="186.3" rx="32" ry="12.3" fill="none" stroke="#e4e4e4" stroke-width="3.2"/>
<ellipse cx="463.7" cy="186.3" rx="32" ry="12.3" fill="none" stroke="#f7f7f7" stroke-width="1.8"/>
<path d="M448.2 159.6 L464.4 154.4 L481.4 163.5 L461.8 171.3z" fill="#ececec" stroke="#c4c4c4" stroke-width="0.6"/>
<path d="M448.2 159.6 L461.8 171.3 V188.3 L449.2 179.2z" fill="#dadada" stroke="#bababa" stroke-width="0.6"/>
<path d="M461.8 171.3 L481.4 163.5 L480 179.2 L461.8 188.3z" fill="#e2e2e2" stroke="#bababa" stroke-width="0.6"/>
<text x="471.3" y="177.6" font-size="4.4" fill="#8c8c8c" text-anchor="middle" font-weight="bold" transform="rotate(-24 471.3 176.2)">PRAWO</text>
<text x="455.3" y="175.8" font-size="3.8" fill="#a0a0a0" text-anchor="middle" font-weight="bold" transform="rotate(40 455.3 174.5)">PRZÓD</text>
<path d="M440 192 l3-1.5 l0.5 3z M485 194.5 l3 0.5 l-2 2.5z M486 176 l3 1.5 l-3 1.5z" fill="#cfcfcf"/>
</g>
<rect x="488.8" y="209.5" width="18.0" height="61.0" rx="2.5" fill="#f6f6f6" stroke="#c6c6c6" stroke-width="0.8"/><circle cx="497.8" cy="226.0" r="5.3" fill="#f0f0f0" stroke="#c2c6cc" stroke-width="1.2"/><circle cx="497.8" cy="226.0" r="2.3" fill="#fafafa" stroke="#cfd2d6" stroke-width="0.8"/><ellipse cx="501.5" cy="229.7" rx="2.6" ry="2" fill="#8fbce6"/><path d="M496.3 236.0 h3 l-1.5 2z" fill="#9a9a9a"/><path d="M491.8 239.7 h12.0" stroke="#dcdcdc" stroke-width="0.7"/><rect x="493.6" y="244.5" width="6.4" height="6.4" fill="#8fc272"/><path d="M496.8 244.5 v6.4 M493.6 247.7 h6.4" stroke="#d6ecc8" stroke-width="0.6"/><path d="M499.1 250.0 l3 3" stroke="#8a8a8a" stroke-width="1.1"/><path d="M496.3 257.7 h3 l-1.5 2z" fill="#9a9a9a"/><circle cx="503.5" cy="212.8" r="1.3" fill="#e6e6e6" stroke="#bbb" stroke-width="0.5"/><circle cx="503.5" cy="267.2" r="1.3" fill="#e6e6e6" stroke="#bbb" stroke-width="0.5"/>
<rect x="735.8" y="127.5" width="17.6" height="60.5" rx="2.5" fill="#f6f6f6" stroke="#c6c6c6" stroke-width="0.8"/><circle cx="744.6" cy="144.0" r="5.3" fill="#f0f0f0" stroke="#c2c6cc" stroke-width="1.2"/><circle cx="744.6" cy="144.0" r="2.3" fill="#fafafa" stroke="#cfd2d6" stroke-width="0.8"/><ellipse cx="748.3" cy="147.7" rx="2.6" ry="2" fill="#8fbce6"/><path d="M743.1 154.0 h3 l-1.5 2z" fill="#9a9a9a"/><path d="M738.8 157.7 h11.6" stroke="#dcdcdc" stroke-width="0.7"/><rect x="740.4" y="162.5" width="6.4" height="6.4" fill="#8fc272"/><path d="M743.6 162.5 v6.4 M740.4 165.7 h6.4" stroke="#d6ecc8" stroke-width="0.6"/><path d="M745.9 168.0 l3 3" stroke="#8a8a8a" stroke-width="1.1"/><path d="M743.1 175.7 h3 l-1.5 2z" fill="#9a9a9a"/><circle cx="750.1" cy="130.8" r="1.3" fill="#e6e6e6" stroke="#bbb" stroke-width="0.5"/><circle cx="750.1" cy="184.7" r="1.3" fill="#e6e6e6" stroke="#bbb" stroke-width="0.5"/>
<g fill="#f4f6fa" stroke="#6a7288" stroke-width="0.8"><rect x="527" y="115.5" width="6.5" height="8" rx="0.8"/><rect x="529.8" y="117.8" width="5.6" height="6.6" rx="0.8"/></g>
<g stroke="#70788c" stroke-width="1" stroke-linejoin="round"><rect x="783" y="139" width="14.5" height="20" rx="1.2" fill="#dde0e8"/><rect x="790.3" y="145.3" width="11.5" height="15" rx="1.2" fill="#f6f7fa"/><path d="M797.5 139 v6" fill="none"/></g>
<path d="M938.5 179.3 l2.0 2.0 l2.0 -2.0" fill="none" stroke="#666" stroke-width="0.8"/>
<g stroke="#6a7a98" stroke-width="0.6" fill="#e8ecf4"><rect x="950" y="176" width="6.6" height="8"/><path d="M950 178.6 h6.6 M950 181.3 h6.6 M953.3 176 v8" fill="none"/></g><rect x="950" y="176" width="3.3" height="2.6" fill="#7a8cb0"/>
<path d="M992.1 194.6 l2.2 -2.2 l2.2 2.2" fill="none" stroke="#555" stroke-width="0.9"/>
<path d="M992.1 495.4 l2.2 2.2 l2.2 -2.2" fill="none" stroke="#555" stroke-width="0.9"/>
<rect x="214.7" y="508.0" width="9.8" height="8.6" fill="#c4c7d0" stroke="#6e7386" stroke-width="0.7"/><rect x="214.7" y="508.0" width="9.8" height="2.4" fill="#6e7386"/><path d="M214.7 513.5 h9.8" stroke="#8a8fa0" stroke-width="0.5"/>
<path d="M227.9 511.0 l2.5-2.5 h7.5 v6 l-2.5 2.5 h-7.5z" fill="#4f95dc" stroke="#2f6cb0" stroke-width="0.6"/><path d="M227.9 511.0 h7.5 l2.5-2.5 M235.4 511.0 v6" fill="none" stroke="#cfe2f6" stroke-width="0.6"/>
<circle cx="244.6" cy="511.8" r="3.4" fill="#f2c230" stroke="#c89010" stroke-width="0.6"/><path d="M246.6 513.3 l3.2 3.2 m0 -3.2 l-3.2 3.2" stroke="#d82020" stroke-width="1.3"/>
<circle cx="258.1" cy="511.6" r="3.3" fill="#dce8f6" stroke="#3f7cc4" stroke-width="1"/><path d="M255.3 516.2 h5" stroke="#3f7cc4" stroke-width="1"/><path d="M260.3 513.3 l3.2 3.2 m0 -3.2 l-3.2 3.2" stroke="#d82020" stroke-width="1.3"/>
<path d="M267.5 509.5 h7 v5 h-7z" fill="#dfe8f2" stroke="#9ab4d0" stroke-width="0.8"/><path d="M273.5 513.5 l2.5 3" stroke="#7a8aa0" stroke-width="0.9"/>
<path d="M280.7 509.0 h4 v4 h-4z M284.7 511.0 h4 v4 h-4z" fill="#3f7cc4"/><path d="M286.0 513.0 l3.2 3.2 m0 -3.2 l-3.2 3.2" stroke="#d82020" stroke-width="1.3"/><path d="M281.2 516.6 h6" stroke="#2f5c94" stroke-width="1"/>
<path d="M293.9 509.0 h4 v4 h-4z M297.9 511.0 h4 v4 h-4z" fill="#3f7cc4"/><path d="M294.4 516.6 h7" stroke="#2f5c94" stroke-width="1"/><circle cx="301.0" cy="514.8" r="1.6" fill="#7fb0e4"/>
<rect x="306.6" y="508.5" width="8" height="8" rx="1" fill="#8a919c" stroke="#5a606c" stroke-width="0.6"/><rect x="308.6" y="510.0" width="4" height="4.4" fill="#e4f0e0"/><circle cx="313.5" cy="515.0" r="1.8" fill="#6aa860"/>
<path d="M320.3 512.5 c2-3 6-3 7.5 0 l-2 2.5 l-1.2-1.6 l-1.3 2.5" fill="none" stroke="#8a919c" stroke-width="1.2"/>
<path d="M335.0 513.2 a2.2 2.2 0 1 1 2.2 0 v1.6 h-2.2z" fill="#bcdcf8" stroke="#4f95dc" stroke-width="0.7"/>
<rect x="345.5" y="509.8" width="9" height="6.4" rx="0.8" fill="#f0f0f0" stroke="#3a3e48" stroke-width="1"/><circle cx="351.0" cy="513.0" r="1.7" fill="#3a3e48"/><path d="M352.2 514.2 l2.4 2.4" stroke="#3a3e48" stroke-width="1"/>
<ellipse cx="362.3" cy="513.0" rx="4.4" ry="3.4" fill="#a8acb4" stroke="#5a5f6a" stroke-width="0.8"/><ellipse cx="363.1" cy="512.2" rx="2.8" ry="2" fill="#e4e6ea" stroke="#5a5f6a" stroke-width="0.6"/><path d="M363.7 510.0 h3 v-2.2" stroke="#5a5f6a" stroke-width="0.8" fill="none"/>
<path d="M370.5 508.8 h2.4 v2.4 h-2.4z M377.2 508.8 h2.4 v2.4 h-2.4z M377.2 514.6 h2.4 v2.4 h-2.4z" fill="#3a3e48"/><path d="M372.9 510.0 h5 M378.4 511.2 v5" stroke="#5a5f6a" stroke-width="0.7" fill="none"/><rect x="372.6" y="513.2" width="3.4" height="3.4" fill="#8a919c"/>
<rect x="569.9" y="508.8" width="9.4" height="8" fill="#f0f0f2" stroke="#2e3240" stroke-width="1.1"/><path d="M569.9 508.8 l9.4 8 m0 -8 l-9.4 8" stroke="#2e3240" stroke-width="0.7"/><rect x="572.4" y="511.1" width="4.4" height="3.4" fill="#fff" stroke="#2e3240" stroke-width="0.6"/>
<path d="M582.8 511.0 l2.5-2.5 h7.5 v6 l-2.5 2.5 h-7.5z" fill="#e8e8ec" stroke="#6a6f7e" stroke-width="0.7"/><path d="M582.8 511.0 h7.5 l2.5-2.5 M590.3 511.0 v6" fill="none" stroke="#6a6f7e" stroke-width="0.6"/>
<circle cx="599.3" cy="511.8" r="3.4" fill="#f2c230" stroke="#c89010" stroke-width="0.6"/><path d="M601.3 513.3 l3.2 3.2 m0 -3.2 l-3.2 3.2" stroke="#d82020" stroke-width="1.3"/>
<circle cx="613.0" cy="511.6" r="3.3" fill="#dce8f6" stroke="#3f7cc4" stroke-width="1"/><path d="M610.2 516.2 h5" stroke="#3f7cc4" stroke-width="1"/><path d="M615.2 513.3 l3.2 3.2 m0 -3.2 l-3.2 3.2" stroke="#d82020" stroke-width="1.3"/>
<path d="M622.2 509.0 h4 v4 h-4z M626.2 511.0 h4 v4 h-4z" fill="#3f7cc4"/><path d="M627.5 513.0 l3.2 3.2 m0 -3.2 l-3.2 3.2" stroke="#d82020" stroke-width="1.3"/><path d="M622.7 516.6 h6" stroke="#2f5c94" stroke-width="1"/>
<path d="M634.9 509.0 h4 v4 h-4z M638.9 511.0 h4 v4 h-4z" fill="#3f7cc4"/><path d="M635.4 516.6 h7" stroke="#2f5c94" stroke-width="1"/><circle cx="642.0" cy="514.8" r="1.6" fill="#7fb0e4"/>
<path d="M648.8 512.5 c2-3 6-3 7.5 0 l-2 2.5 l-1.2-1.6 l-1.3 2.5" fill="none" stroke="#8a919c" stroke-width="1.2"/>
<path d="M663.5 513.2 a2.2 2.2 0 1 1 2.2 0 v1.6 h-2.2z" fill="#bcdcf8" stroke="#4f95dc" stroke-width="0.7"/>
<rect x="673.3" y="509.8" width="9" height="6.4" rx="0.8" fill="#f0f0f0" stroke="#3a3e48" stroke-width="1"/><circle cx="678.8" cy="513.0" r="1.7" fill="#3a3e48"/><path d="M680.0 514.2 l2.4 2.4" stroke="#3a3e48" stroke-width="1"/>
<path d="M686.3 508.8 h2.4 v2.4 h-2.4z M693.0 508.8 h2.4 v2.4 h-2.4z M693.0 514.6 h2.4 v2.4 h-2.4z" fill="#3a3e48"/><path d="M688.7 510.0 h5 M694.2 511.2 v5" stroke="#5a5f6a" stroke-width="0.7" fill="none"/><rect x="688.4" y="513.2" width="3.4" height="3.4" fill="#8a919c"/>
<g><circle cx="353" cy="525.5" r="3" fill="#5a9ae0" stroke="#2f6cb0" stroke-width="0.6"/><path d="M349.5 532.5 a3.5 3.5 0 0 1 7 0z" fill="#3f7cc4"/><rect x="355" y="527.5" width="4.4" height="4.8" fill="#8cc470" stroke="#4f8a3c" stroke-width="0.5"/></g>
<path d="M489.6 526.0 l2.0 2.0 l2.0 -2.0" fill="none" stroke="#bbb" stroke-width="0.8"/>
<path d="M687.6 526.0 l2.0 2.0 l2.0 -2.0" fill="none" stroke="#bbb" stroke-width="0.8"/>
<path d="M502 531.5 l3.5-6 v6z" fill="#b4b4b4"/>
<circle cx="517.3" cy="527.8" r="2.6" fill="none" stroke="#555" stroke-width="1.4" stroke-dasharray="1.3 0.8"/><circle cx="517.3" cy="527.8" r="0.9" fill="#555"/>
<rect x="532.6" y="522.3" width="10" height="10" rx="1" fill="#eef0f6" stroke="#3a4668" stroke-width="1.1"/><rect x="532.6" y="522.3" width="10" height="3" fill="#3a4668"/><path d="M536 527 h4 M538 527 v4" stroke="#3a4668" stroke-width="0.9"/>
<rect x="548.3" y="522.8" width="9.2" height="9" fill="#b8b8b8" stroke="#a0a0a0" stroke-width="0.6"/><path d="M548.3 526 h9.2 M551.5 522.8 v9" stroke="#d8d8d8" stroke-width="0.7"/>
<g>
<path d="M851 524 h8.6 l-1.2 3.5 h-6.2z" fill="#e8c030"/><rect x="852.8" y="527.5" width="5" height="4.5" fill="#444"/><path d="M854 529 l1.3 1.6 l1.3-1.6" stroke="#eee" stroke-width="0.6" fill="none"/>
<path d="M866.5 523.5 h6 l2.5 2.5 v6.5 h-8.5z" fill="#dce8f8" stroke="#3f7cc4" stroke-width="0.7"/><rect x="871.6" y="522.6" width="4" height="4" fill="#d83030"/><path d="M868 529.5 l2 2 l3-4" stroke="#3f7cc4" stroke-width="0.8" fill="none"/>
<circle cx="885" cy="525" r="2" fill="#f09838"/><path d="M881.5 531 a3.5 3.4 0 0 1 7 0z" fill="#f09838"/><path d="M887.5 527.5 l3.5 4 h-2.2 v1.2" stroke="#555" stroke-width="0.7" fill="none"/><circle cx="889.4" cy="526.6" r="1.3" fill="#f4b870"/>
<path d="M897.5 523.5 h6 l2.5 2.5 v6.5 h-8.5z" fill="#dce8f8" stroke="#3f7cc4" stroke-width="0.7"/><rect x="902.6" y="522.6" width="4" height="4" fill="#d83030"/><path d="M899 526 v5 M901.5 526 v5" stroke="#3f7cc4" stroke-width="0.8"/>
<path d="M914 526 l3.5-2.5 v1.7 h3 v1.6 h-3 v1.7z M923.7 530 l-3.5-2.5 v1.7 h-3 v1.6 h3 v1.7z" fill="#4a4a4a"/>
<circle cx="933.2" cy="528" r="3.3" fill="none" stroke="#8e8e8e" stroke-width="0.9"/>
<path d="M943 523.5 h9.5 l-3.7 4.3 v4.2 l-2.1-1 v-3.2z" fill="#f4f4f4" stroke="#333" stroke-width="0.9" stroke-linejoin="round"/>
</g>
</svg>
</body></html>
